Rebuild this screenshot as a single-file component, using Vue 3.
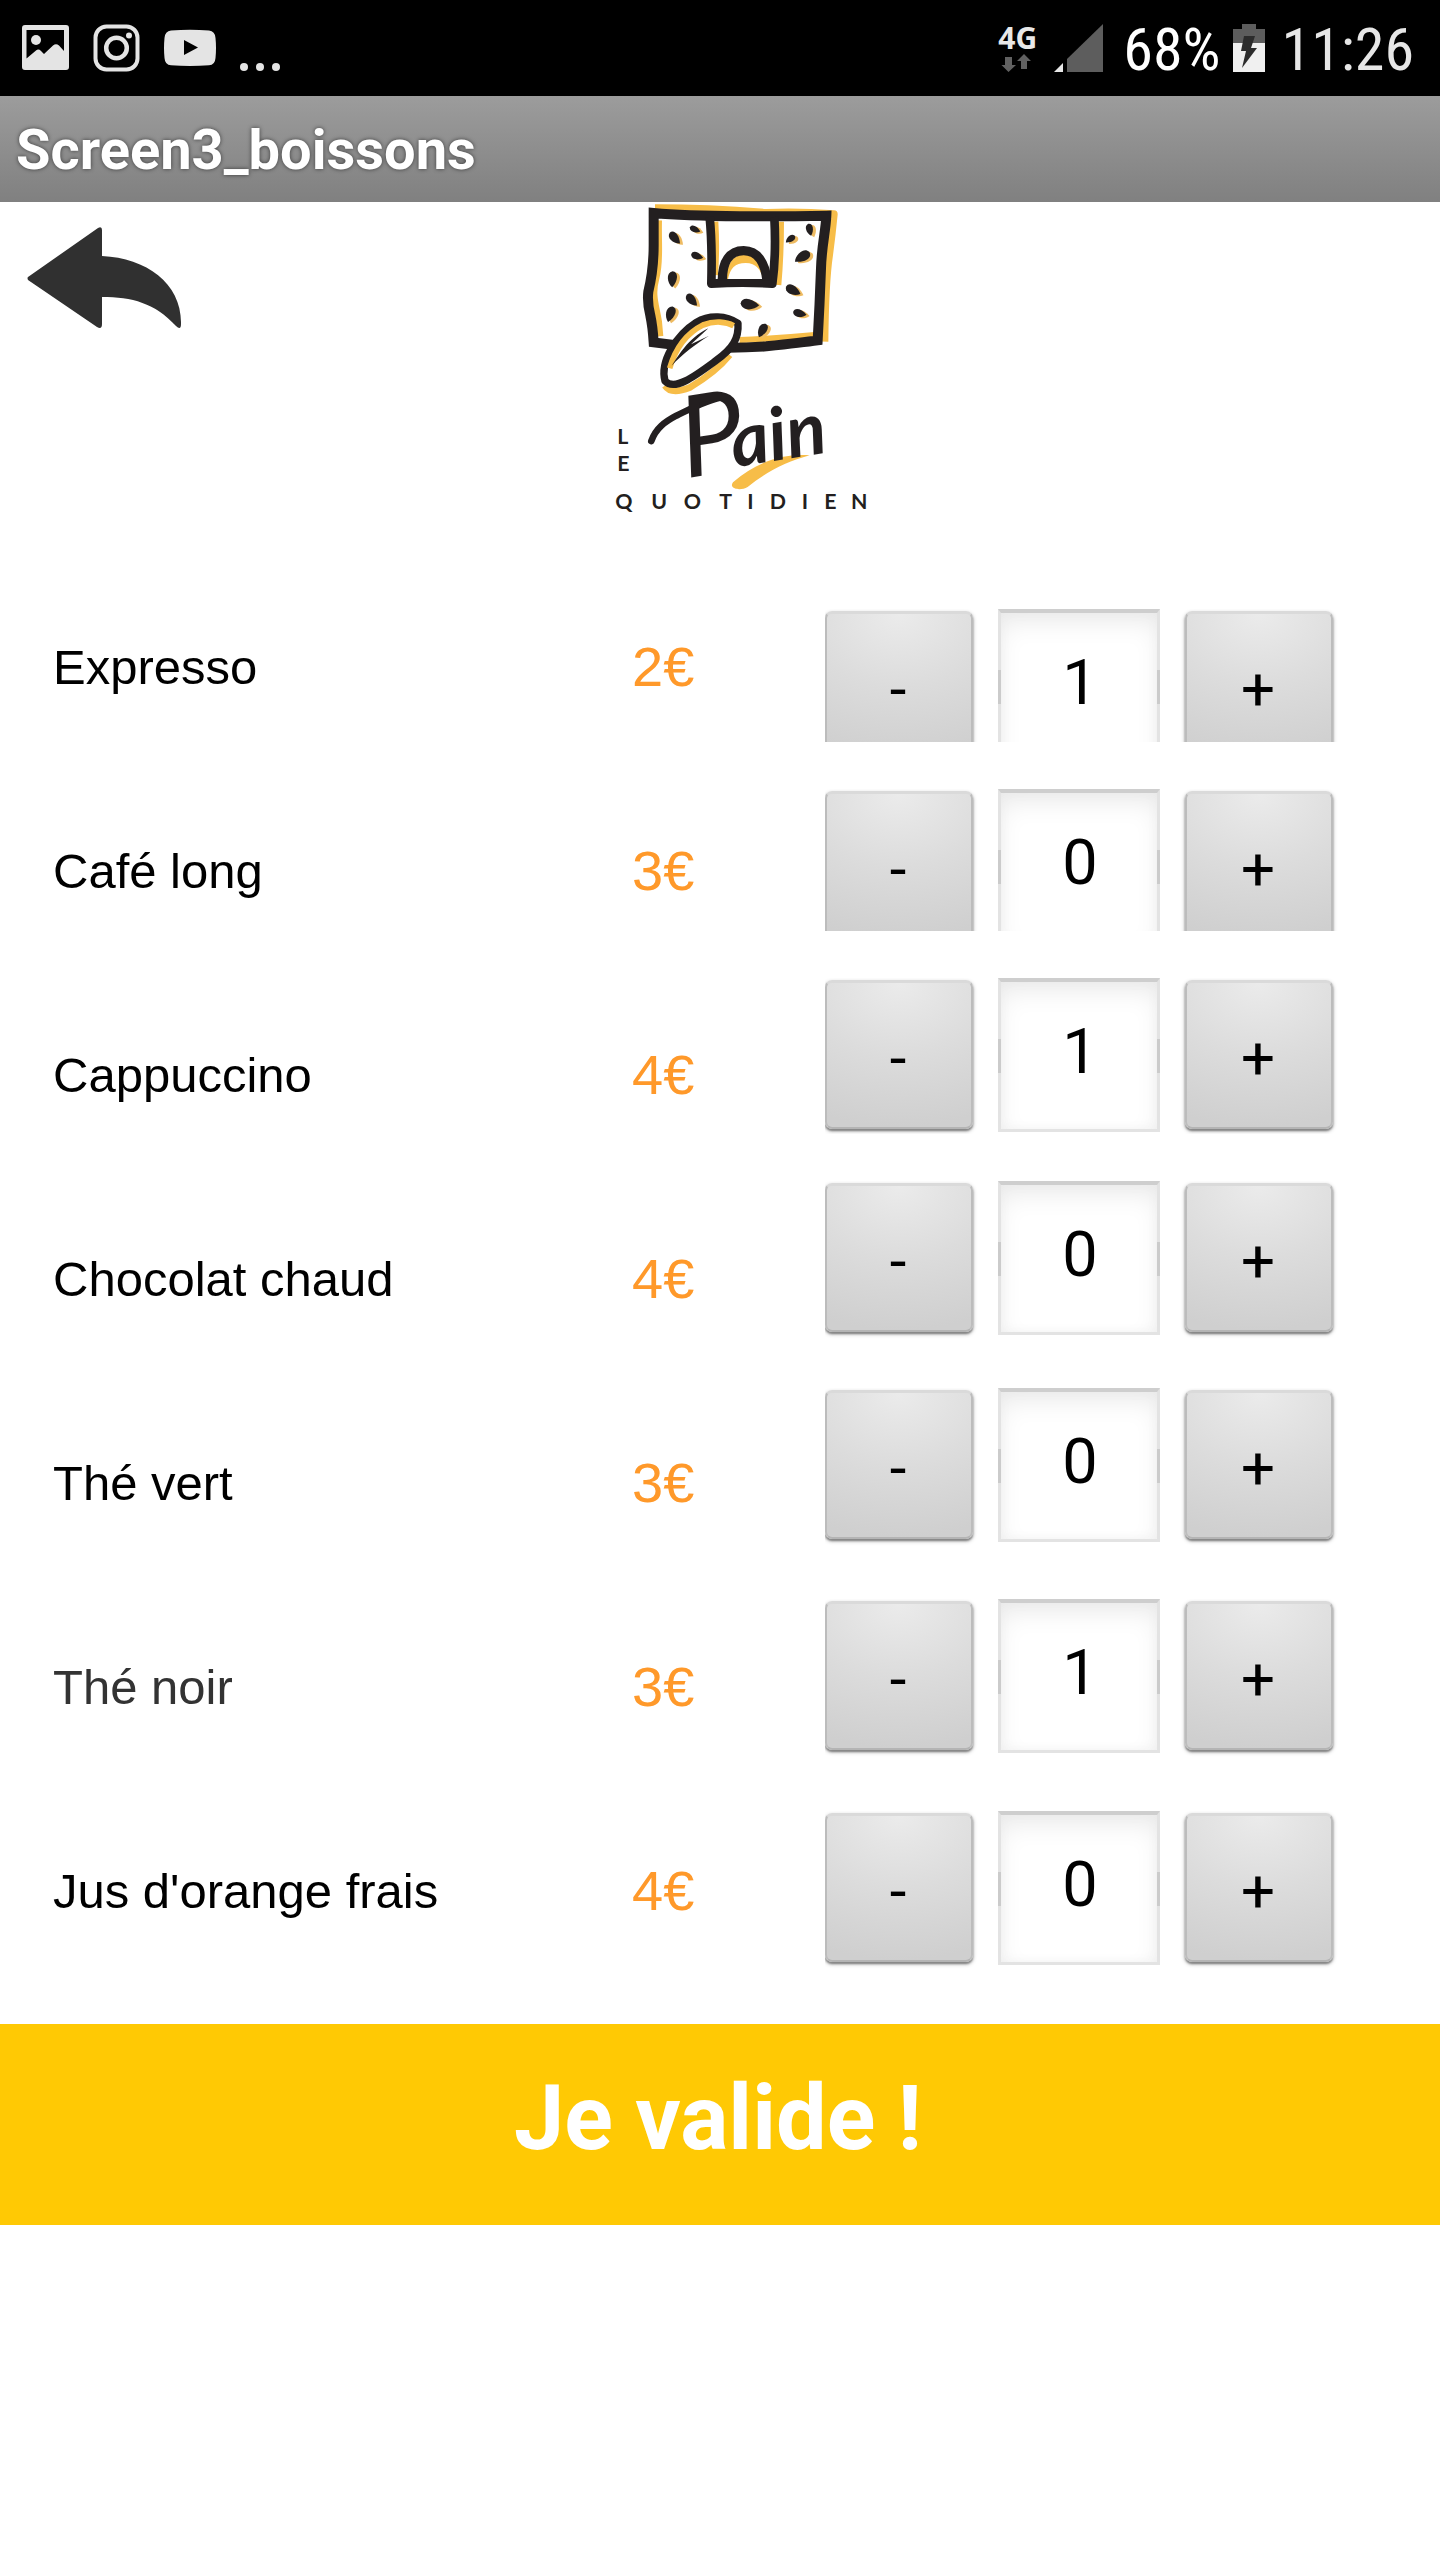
<script setup>
import { reactive } from 'vue'

const drinks = reactive([
  { id: 'expresso', name: 'Expresso', price: '2€', qty: 1, height: 133 },
  { id: 'cafe-long', name: 'Café long', price: '3€', qty: 0, height: 142 },
  { id: 'cappuccino', name: 'Cappuccino', price: '4€', qty: 1, height: 156 },
  { id: 'chocolat', name: 'Chocolat chaud', price: '4€', qty: 0, height: 160 },
  { id: 'the-vert', name: 'Thé vert', price: '3€', qty: 0, height: 164 },
  { id: 'the-noir', name: 'Thé noir', price: '3€', qty: 1, height: 165, soft: true },
  { id: 'jus-orange', name: "Jus d'orange frais", price: '4€', qty: 0, height: 165 }
])

function change(drink, step) {
  drink.qty = Math.max(0, Number(drink.qty) + step)
}

// Sesame seeds on the loaf: x, y, rotation and scale
const seeds = [
  [225, 129, 40, 1.2], [286, 103, 15, 0.9], [292, 183, 10, 1], [218, 252, 85, 1.3],
  [276, 315, 40, 1.2], [212, 357, 100, 1.3], [450, 328, 0, 1.5], [488, 406, 110, 1.2],
  [572, 132, 135, 0.9], [630, 104, 70, 1], [608, 185, 140, 1.4], [580, 286, 20, 1.3],
  [600, 355, 5, 1.1]
]
</script>

<template>
  <div class="screen">
    <div class="status">
      <div class="status-group notices">
        <svg width="47" height="48" viewBox="0 0 47 48" aria-hidden="true">
          <path fill="#e4e4e4" fill-rule="evenodd" d="M3 1H44Q47 1 47 4V43Q47 46 44 46H3Q0 46 0 43V4Q0 1 3 1ZM4.500 6V34.500L14 26.500Q16.500 24.500 19 27L22 30L31 21.500Q34 19 37 21.500L42 27V6Z" />
          <circle cx="14" cy="16" r="5" fill="#e4e4e4" />
        </svg>
        <svg width="47" height="48" viewBox="0 0 47 48" fill="none" stroke="#e4e4e4" aria-hidden="true">
          <rect x="2.500" y="2.500" width="42" height="43" rx="11" stroke-width="4" />
          <circle cx="23.500" cy="24" r="10.300" stroke-width="4.500" />
          <circle cx="36" cy="11.500" r="3" fill="#e4e4e4" stroke="none" />
        </svg>
        <svg width="52" height="48" viewBox="0 0 52 48" aria-hidden="true">
          <path fill="#e4e4e4" fill-rule="evenodd" d="M7 6.500Q26 5 45 6.500Q51 7 51.500 14Q52.500 24 51.500 34Q51 41 45 41.300Q26 42.500 7 41.300Q1 41 .5 34Q-.5 24 .5 14Q1 7 7 6.500ZM20 16V31L34 23.500Z" />
        </svg>
        <svg width="40" height="48" viewBox="0 0 40 48" fill="#e4e4e4" aria-hidden="true">
          <circle cx="4" cy="43" r="4" /><circle cx="20" cy="43" r="4" /><circle cx="36" cy="43" r="4" />
        </svg>
      </div>
      <div class="status-group system">
        <div class="network">
          <span>4G</span>
          <svg width="38" height="18" viewBox="0 0 38 18" fill="#616161" aria-hidden="true">
            <path d="M7 3H14V11H18L10.500 18L3.500 11H7Z" />
            <path d="M23 15H29V7H33L26 0L19 7H23Z" />
          </svg>
        </div>
        <svg class="signal" width="49" height="48" viewBox="0 0 49 48" aria-hidden="true">
          <path fill="#e8e8e8" d="M0 48L9 39V48Z" />
          <path fill="#5d5d5d" d="M13 48V35L49 0V48Z" />
        </svg>
        <span class="percent">68%</span>
        <svg class="battery" width="32" height="48" viewBox="0 0 32 48" aria-hidden="true">
          <path fill="#5d5d5d" d="M9 0H23V5H32V19H0V5H9Z" />
          <path fill="#f0f0f0" d="M0 19H32V48H0Z" />
          <path fill="#2c2c2c" d="M11 12H22L18 24H24L9 44L13 27H8Z" />
        </svg>
        <span class="clock">11:26</span>
      </div>
    </div>

    <header class="title-bar"><h1>Screen3_boissons</h1></header>

    <div class="brand">
      <button class="back" type="button" aria-label="Retour">
        <svg width="156" height="104" viewBox="0 0 156 104" aria-hidden="true">
          <path fill="#303030" d="M1 51L71 2Q75 0 75 4V30C120 32 155 58 154 98Q154 105 149 100C128 77 105 71 75 71V98Q75 104 70 101L1 54Q0 52 1 51Z" />
        </svg>
      </button>
      <svg class="logo" width="260" height="323" viewBox="40 21 780 969" role="img" aria-label="Le Pain Quotidien">
        <g fill="none" stroke="#f7bd48" stroke-linejoin="round">
          <path stroke-width="24" d="M166 40Q330 40 500 54Q600 50 702 58Q696 120 688 180Q676 260 674 440" />
          <path stroke-width="18" d="M178 76C176 150 184 200 170 250C156 300 170 330 178 380L182 424M347 80Q352 160 346 240M544 80Q544 180 536 270M420 435Q540 430 645 420" />
          <path stroke-width="20" d="M196 572Q214 600 270 578Q350 530 390 480" />
        </g>
        <path fill="none" stroke="#231f20" stroke-width="30" stroke-linejoin="miter" d="M162 54Q250 62 420 64Q560 64 680 62C678 110 666 150 664 220Q660 330 654 436Q610 442 500 454Q330 466 162 442C160 410 158 390 152 362Q142 320 146 290C158 240 162 200 162 150Z" />
        <path fill="none" stroke="#231f20" stroke-width="26" stroke-linejoin="round" d="M330 66Q338 150 335 266Q430 260 518 266Q530 180 524 66" />
        <path fill="#f7bd48" d="M380 252C382 205 400 178 436 178C470 178 490 205 494 252Z" />
        <path fill="#fff" d="M385 252C392 220 405 204 438 204C470 204 484 225 490 252Z" />
        <path fill="none" stroke="#231f20" stroke-width="28" d="M368 256C368 200 390 167 432 167C475 167 496 205 502 256" />
        <g v-for="(s, i) in seeds" :key="i" :transform="`translate(${s[0]} ${s[1]})`">
          <path fill="#eebb62" :transform="`translate(9 4) rotate(${s[2]}) scale(${s[3]})`" d="M-18 -2C-16 -16 4 -14 19 2C8 13 -16 14 -18 -2Z" />
          <path fill="#231f20" :transform="`rotate(${s[2]}) scale(${s[3]})`" d="M-18 -2C-16 -16 4 -14 19 2C8 13 -16 14 -18 -2Z" />
        </g>
        <path fill="#fff" stroke="#231f20" stroke-width="22" stroke-linejoin="round" d="M196 558C180 500 230 420 290 382C330 358 380 362 415 385C418 430 400 460 350 496C290 540 226 590 196 558Z" />
        <path fill="none" stroke="#f7bd48" stroke-width="17" d="M210 520C230 450 270 410 310 390C345 376 380 380 402 392" />
        <path fill="#231f20" d="M216 512C236 484 262 432 326 400L274 448L328 422C286 448 250 476 216 512Z" />
        <path fill="none" stroke="#231f20" stroke-width="20" stroke-linecap="round" d="M155 738C168 700 196 680 230 662C280 638 320 616 360 608" />
        <path fill="#f7bd48" d="M400 862C470 800 550 775 630 781C560 800 500 830 444 876C420 890 386 880 400 862Z" />
        <g fill="#231f20">
          <text class="script" transform="translate(258 850) rotate(-9)"><tspan class="script-initial">P</tspan><tspan x="150" y="-10">ain</tspan></text>
          <text class="caps" x="53" y="747">L</text>
          <text class="caps" x="53" y="829">E</text>
          <text class="caps" x="47 155 252 359 443 510 606 674 754" y="942">QUOTIDIEN</text>
        </g>
      </svg>
    </div>

    <main class="menu">
      <ul class="drinks">
        <li v-for="d in drinks" :key="d.id">
          <label :for="d.id" :class="{ soft: d.soft }">{{ d.name }}</label>
          <span class="price">{{ d.price }}</span>
        </li>
      </ul>
      <div class="steppers">
        <div v-for="d in drinks" :key="d.id" class="stepper" :style="{ height: d.height + 'px' }">
          <button type="button" class="step" @click="change(d, -1)">-</button>
          <input :id="d.id" v-model="d.qty" class="qty" type="text" inputmode="numeric" />
          <button type="button" class="step" @click="change(d, 1)">+</button>
        </div>
      </div>
    </main>

    <button class="validate" type="button">Je valide !</button>
  </div>
</template>

<style>
body {
  background: #fff;
}
</style>

<style scoped>
.screen {
  font-family: Roboto, sans-serif;
  color: #000;
}
.status {
  display: flex;
  align-items: center;
  justify-content: space-between;
  height: 96px;
  padding: 0 26px 0 22px;
  background: #000;
}
.status-group {
  display: flex;
  align-items: center;
}
.notices {
  gap: 24px;
}
.network {
  display: flex;
  flex-direction: column;
  gap: 3px;
  width: 38px;
  margin-right: 18px;
  color: #e8e8e8;
  font: 700 30px/27px "Noto Sans", sans-serif;
}
.signal {
  margin-right: 20px;
}
.percent,
.clock {
  padding-top: 4px;
  font-family: "Roboto Condensed", "Liberation Sans Narrow", Roboto, sans-serif;
  font-size: 60px;
  line-height: 70px;
  color: #fff;
}
.battery {
  margin: 0 17px 0 12px;
}
.clock {
  color: #e6e6e6;
}
.title-bar {
  display: flex;
  align-items: center;
  height: 106px;
  padding: 0 16px;
  background: linear-gradient(#9c9c9c, #808080);
}
h1 {
  margin: 0;
  padding-top: 2px;
  font-size: 56px;
  line-height: 64px;
  color: #fff;
  text-shadow: 0 0 4px rgba(0, 0, 0, 0.6);
}
.brand {
  display: grid;
  grid-template-columns: 613fr 827fr;
  align-items: start;
  height: 363px;
}
.back {
  justify-self: start;
  margin: 24px 0 0 27px;
  padding: 0;
  border: 0;
  background: none;
}
.back svg,
.logo {
  display: block;
}
.caps {
  font: 700 64px Lato, sans-serif;
}
.script {
  font: italic 700 220px Lato, sans-serif;
}
.script-initial {
  font-size: 340px;
  font-weight: 400;
}
.menu {
  display: grid;
  grid-template-columns: 825fr 615fr;
  align-items: start;
}
.drinks {
  margin: 0;
  padding: 0;
  list-style: none;
  font-family: "Liberation Sans", Arial, sans-serif;
}
.drinks li {
  display: grid;
  grid-template-columns: 632fr 193fr;
  align-items: center;
  height: 204px;
}
.drinks label {
  padding-left: 53px;
  font-size: 49px;
  line-height: 56px;
}
.drinks .soft {
  color: #333;
}
.price {
  font-size: 56px;
  line-height: 64px;
  color: #ff992a;
}
.steppers {
  display: flex;
  flex-direction: column;
  gap: 47px;
  padding-top: 44px;
}
.stepper {
  display: flex;
  align-items: flex-start;
  gap: 25px;
  overflow: hidden;
}
.step {
  flex: none;
  box-sizing: border-box;
  width: 148px;
  height: 149px;
  margin: 2px 0 0;
  padding: 8px 2px 0 0;
  border: 2px solid #bcbcbc;
  border-top: 3px solid #dadada;
  border-bottom-color: #b4b4b4;
  border-radius: 7px;
  background: radial-gradient(ellipse 130% 100% at 50% 0, #ebebeb, #dcdcdc 50%, #cfcfcf);
  box-shadow: 0 2px 2px #868686, 0 2px 4px rgba(0, 0, 0, 0.3);
  color: #000;
  font: 60px/64px Roboto, sans-serif;
}
.qty {
  flex: none;
  box-sizing: border-box;
  width: 162px;
  height: 154px;
  padding: 0 0 9px 2px;
  border: 3px solid rgba(0, 0, 0, 0.11);
  border-top: 4px solid rgba(0, 0, 0, 0.19);
  border-radius: 0;
  background:
    linear-gradient(#e4e4e4, #e4e4e4) 0 61px / 3px 34px no-repeat border-box,
    linear-gradient(#e4e4e4, #e4e4e4) 100% 61px / 3px 34px no-repeat border-box,
    #fff;
  background-origin: border-box;
  box-shadow: inset 0 12px 28px -6px #e6e6e6, inset 0 0 12px #f5f5f5;
  color: #000;
  font: 63px/72px Roboto, sans-serif;
  text-align: center;
}
.validate {
  display: block;
  width: 100%;
  height: 201px;
  margin: 31px 0 0;
  padding: 0 4px 12px 0;
  border: 0;
  background: #ffc904;
  color: #fff;
  font: 700 90px/104px Roboto, sans-serif;
}
</style>
